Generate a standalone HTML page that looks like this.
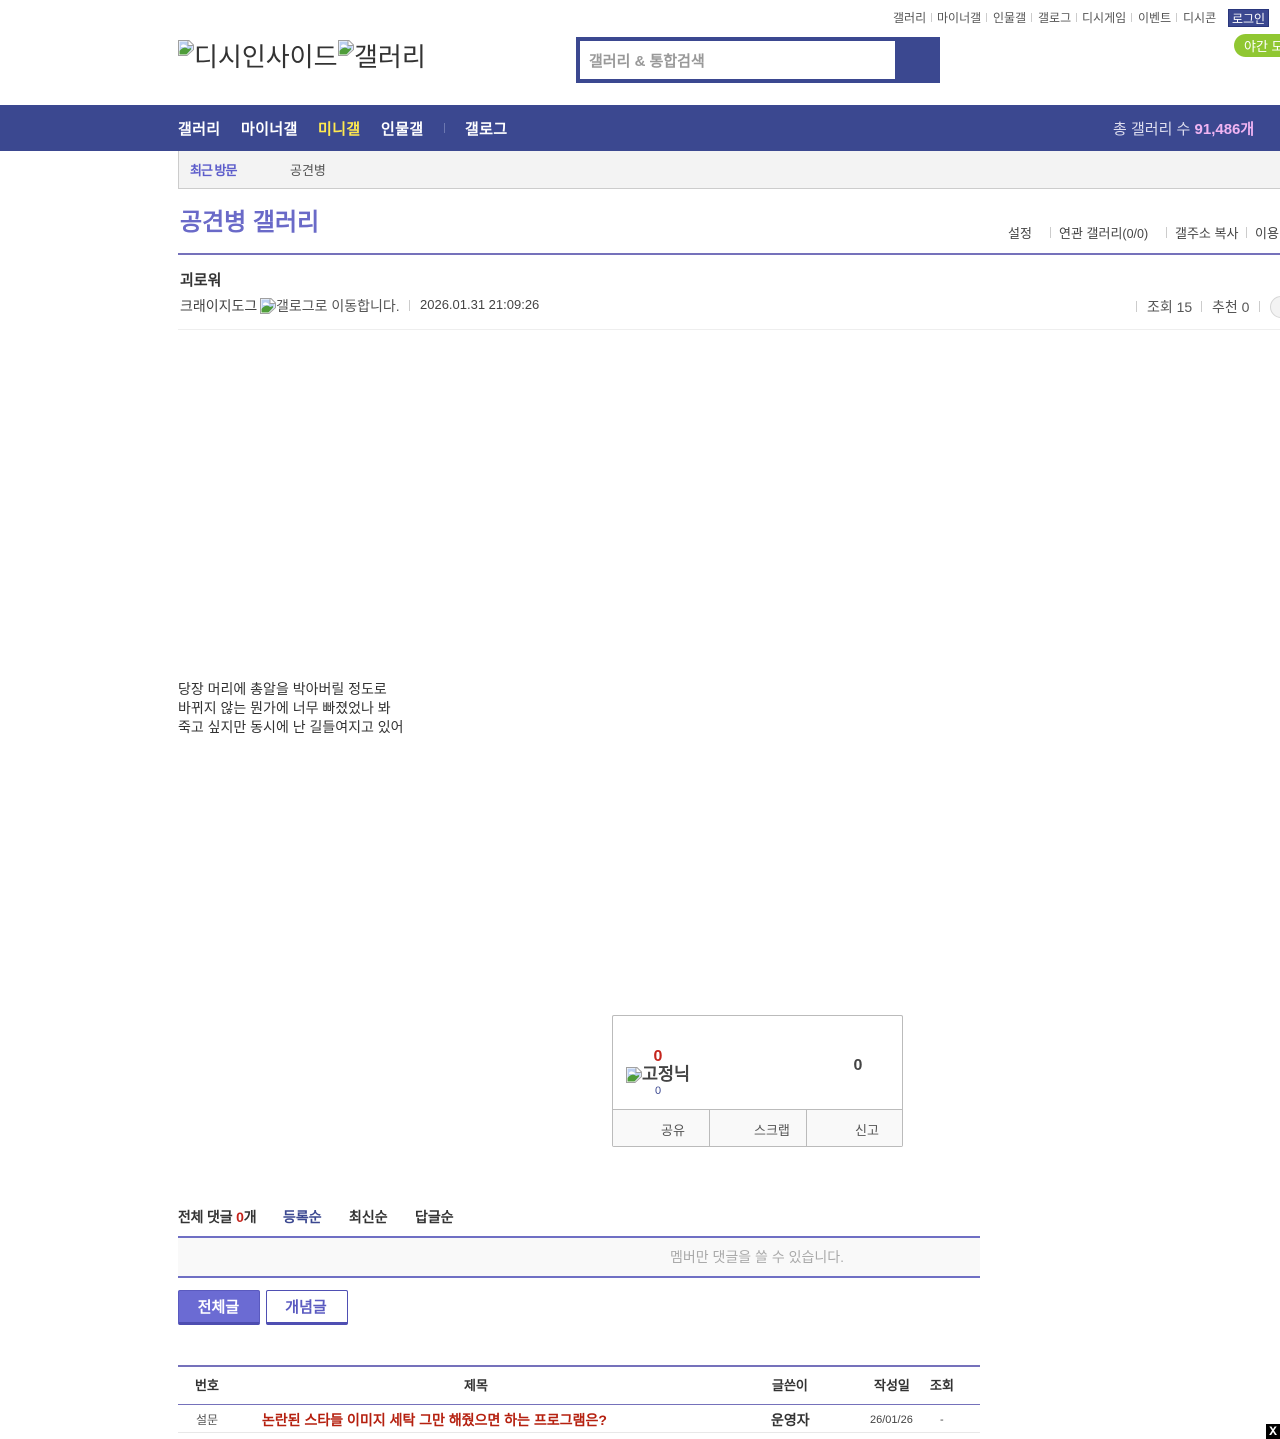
<!DOCTYPE html>
<html><head><meta charset="utf-8"><title>공견병 갤러리</title>
<style>
html,body{margin:0;padding:0;background:#fff;width:1280px;height:1439px;overflow:hidden}
body{position:relative;font-family:"Liberation Sans",sans-serif;color:#333}
.a{position:absolute;white-space:nowrap}
.b{position:absolute}
.s{position:absolute;width:1px;background:#ccc}
svg.i{position:absolute;width:16px;height:16px}
</style></head><body>
<svg width="0" height="0" style="position:absolute"><defs><symbol id="bk" viewBox="0 0 16 16"><path d="M.5.5H11L15.500 5V9.500L9 15.500H.5Z" fill="#fff" stroke="#a0a0a0"/><path d="M1.500 1.500H10V6H14.500V9L8.500 14.500H1.500Z" fill="#bcd0f2"/><path d="M3 6c1-2 3-2 4-1 1 0 2 1 2 2H3Z" fill="#fff"/><path d="M1.500 14.500V11C5 7 8 7 10 9L13 8V9.500L8.500 14.500Z" fill="#4f9d3a"/><path d="M10 1V5.500H15" fill="#fff" stroke="#a0a0a0"/></symbol></defs></svg>

<div class="a" style="left:893px;top:12px;font-size:12px;color:#555;line-height:13px">갤러리</div><div class="s" style="left:931px;top:13px;height:9px"></div>
<div class="a" style="left:937px;top:12px;font-size:12px;color:#555;line-height:13px">마이너갤</div><div class="s" style="left:986px;top:13px;height:9px"></div>
<div class="a" style="left:993px;top:12px;font-size:12px;color:#555;line-height:13px">인물갤</div><div class="s" style="left:1031px;top:13px;height:9px"></div>
<div class="a" style="left:1038px;top:12px;font-size:12px;color:#555;line-height:13px">갤로그</div><div class="s" style="left:1076px;top:13px;height:9px"></div>
<div class="a" style="left:1082px;top:12px;font-size:12px;color:#555;line-height:13px">디시게임</div><div class="s" style="left:1131px;top:13px;height:9px"></div>
<div class="a" style="left:1138px;top:12px;font-size:12px;color:#555;line-height:13px">이벤트</div><div class="s" style="left:1176px;top:13px;height:9px"></div>
<div class="a" style="left:1183px;top:12px;font-size:12px;color:#555;line-height:13px">디시콘</div>
<div class="a" style="left:1228px;top:9px;width:39px;height:16px;border:1px solid #29367c;background:#3b4890;color:#fff;font-size:12px;line-height:18px;text-align:center">로그인</div>
<div class="a" style="left:1234px;top:34px;width:60px;height:23px;border-radius:12px 0 0 12px;background:#90c732;color:#fff;font-size:13px;line-height:26px;padding-left:10px">야간 모드</div>

<svg class="i" style="left:178px;top:40px"><use href="#bk"/></svg>
<div class="a" style="left:194px;top:42px;font-size:26px;line-height:30px;color:#333">디시인사이드</div>
<svg class="i" style="left:338px;top:40px"><use href="#bk"/></svg>
<div class="a" style="left:354px;top:42px;font-size:26px;line-height:30px;color:#333">갤러리</div>

<div class="b" style="left:576px;top:37px;width:364px;height:46px;background:#3b4890"></div>
<div class="b" style="left:580px;top:41px;width:315px;height:38px;background:#fff"></div>
<div class="a" style="left:589px;top:53px;font-size:15px;line-height:18px;font-weight:700;color:#999">갤러리 &amp; 통합검색</div>

<div class="b" style="left:0;top:105px;width:1280px;height:46px;background:#3b4890"></div>
<div class="a" style="left:178px;top:121px;font-size:15px;line-height:18px;font-weight:700;color:#fff;letter-spacing:.4px">갤러리</div>
<div class="a" style="left:241px;top:121px;font-size:15px;line-height:18px;font-weight:700;color:#fff;letter-spacing:.4px">마이너갤</div>
<div class="a" style="left:318px;top:121px;font-size:15px;line-height:18px;font-weight:700;color:#ffe94f;letter-spacing:.4px">미니갤</div>
<div class="a" style="left:381px;top:121px;font-size:15px;line-height:18px;font-weight:700;color:#fff;letter-spacing:.4px">인물갤</div>
<div class="s" style="left:444px;top:123px;height:10px;background:#6c77b0"></div>
<div class="a" style="left:465px;top:121px;font-size:15px;line-height:18px;font-weight:700;color:#fff;letter-spacing:.4px">갤로그</div>
<div class="a" style="left:1113px;top:121px;font-size:15px;line-height:18px;color:#dde">총 갤러리 수 <b style="color:#f0b4f2">91,486개</b></div>

<div class="b" style="left:178px;top:151px;width:1102px;height:37px;background:#f3f3f3;border-left:1px solid #ccc;border-bottom:1px solid #ccc"></div>
<div class="a" style="left:190px;top:163px;font-size:13px;line-height:16px;font-weight:700;color:#5d5dcb;letter-spacing:-1px">최근 방문</div>
<div class="a" style="left:290px;top:163px;font-size:13px;line-height:16px;color:#555">공견병</div>

<div class="a" style="left:180px;top:208px;font-size:24px;line-height:30px;font-weight:700;color:#6a6ac8">공견병 갤러리</div>
<div class="a" style="left:1008px;top:226px;font-size:13px;line-height:16px;color:#444">설정</div><div class="s" style="left:1050px;top:227px;height:11px"></div>
<div class="a" style="left:1059px;top:226px;font-size:13px;line-height:16px;color:#444">연관 갤러리<span style="font-size:12.500px">(0/0)</span></div><div class="s" style="left:1166px;top:227px;height:11px"></div>
<div class="a" style="left:1175px;top:226px;font-size:13px;line-height:16px;color:#444">갤주소 복사</div><div class="s" style="left:1246px;top:227px;height:11px"></div>
<div class="a" style="left:1255px;top:226px;font-size:13px;line-height:16px;color:#444">이용 안내</div>
<div class="b" style="left:178px;top:253px;width:1102px;height:2px;background:#7571bb"></div>

<div class="a" style="left:180px;top:272px;font-size:15px;line-height:18px;font-weight:700;color:#333">괴로워</div>
<div class="a" style="left:180px;top:297px;font-size:14px;line-height:18px;color:#444">크래이지도그</div>
<svg class="i" style="left:260px;top:298px"><use href="#bk"/></svg>
<div class="a" style="left:276px;top:297px;font-size:14px;line-height:18px;color:#555">갤로그로 이동합니다.</div>
<div class="s" style="left:409px;top:300px;height:11px"></div>
<div class="a" style="left:420px;top:296px;font-size:13px;line-height:18px;color:#444">2026.01.31 21:09:26</div>
<div class="s" style="left:1136px;top:301px;height:11px"></div>
<div class="a" style="left:1147px;top:298px;font-size:14px;line-height:18px;color:#555">조회 15</div>
<div class="s" style="left:1201px;top:301px;height:11px"></div>
<div class="a" style="left:1212px;top:298px;font-size:14px;line-height:18px;color:#555">추천 0</div>
<div class="s" style="left:1259px;top:301px;height:11px"></div>
<div class="b" style="left:1270px;top:296px;width:30px;height:20px;border:1px solid #d5d5d5;border-radius:11px;background:#f3f3f3"></div>
<div class="b" style="left:178px;top:329px;width:1102px;height:1px;background:#eee"></div>

<div class="a" style="left:178px;top:680px;font-size:14px;line-height:19px;color:#333;white-space:pre">당장 머리에 총알을 박아버릴 정도로
바뀌지 않는 뭔가에 너무 빠졌었나 봐
죽고 싶지만 동시에 난 길들여지고 있어</div>

<div class="b" style="left:612px;top:1015px;width:289px;height:130px;border:1px solid #bbb;border-radius:2px"></div>
<div class="b" style="left:613px;top:1109px;width:289px;height:37px;background:#f9f9f9;border-top:1px solid #bbb;box-sizing:border-box"></div>
<div class="b" style="left:709px;top:1110px;width:1px;height:36px;background:#bbb"></div>
<div class="b" style="left:806px;top:1110px;width:1px;height:36px;background:#bbb"></div>
<div class="a" style="left:618px;top:1048px;width:80px;text-align:center;font-size:16px;line-height:18px;font-weight:700;color:#c4241c">0</div>
<svg class="i" style="left:626px;top:1067px"><use href="#bk"/></svg>
<div class="a" style="left:642px;top:1065px;font-size:17.400px;line-height:19px;font-weight:700;color:#444">고정닉</div>
<div class="a" style="left:618px;top:1084px;width:80px;text-align:center;font-size:11px;line-height:14px;color:#3b4890">0</div>
<div class="a" style="left:818px;top:1057px;width:80px;text-align:center;font-size:16px;line-height:18px;font-weight:700;color:#444">0</div>
<div class="a" style="left:661px;top:1123px;font-size:13px;line-height:16px;color:#555">공유</div>
<div class="a" style="left:754px;top:1123px;font-size:13px;line-height:16px;color:#555">스크랩</div>
<div class="a" style="left:855px;top:1123px;font-size:13px;line-height:16px;color:#555">신고</div>

<div class="a" style="left:178px;top:1208px;font-size:14px;line-height:18px;font-weight:700;color:#333;letter-spacing:-.2px">전체 댓글 <span style="color:#c4241c">0</span>개</div>
<div class="a" style="left:283px;top:1208px;font-size:14px;line-height:18px;font-weight:700;color:#3b4890">등록순</div>
<div class="a" style="left:349px;top:1208px;font-size:14px;line-height:18px;font-weight:700;color:#333">최신순</div>
<div class="a" style="left:415px;top:1208px;font-size:14px;line-height:18px;font-weight:700;color:#333">답글순</div>
<div class="b" style="left:178px;top:1236px;width:802px;height:42px;box-sizing:border-box;background:#f9f9f9;border-top:2px solid #6f6fc4;border-bottom:2px solid #6f6fc4"></div>
<div class="a" style="left:670px;top:1248px;font-size:14px;line-height:18px;color:#aaa">멤버만 댓글을 쓸 수 있습니다.</div>

<div class="a" style="left:178px;top:1290px;width:82px;height:35px;box-sizing:border-box;background:#6b6bd3;border:1px solid #5a5abf;border-bottom:3px solid #4d4db0;border-radius:2px;color:#fff;font-size:15px;font-weight:700;line-height:33px;text-align:center;text-indent:-1px">전체글</div>
<div class="a" style="left:266px;top:1290px;width:82px;height:35px;box-sizing:border-box;background:#fff;border:1px solid #4f4fb3;border-bottom:3px solid #4f4fb3;border-radius:2px;color:#5a5ac0;font-size:15px;font-weight:700;line-height:33px;text-align:center;text-indent:-2px">개념글</div>

<div class="b" style="left:178px;top:1365px;width:802px;height:2px;background:#7571bb"></div>
<div class="a" style="left:195px;top:1378px;font-size:13px;line-height:16px;font-weight:700;color:#333">번호</div>
<div class="a" style="left:464px;top:1378px;font-size:13px;line-height:16px;font-weight:700;color:#333">제목</div>
<div class="a" style="left:772px;top:1378px;font-size:13px;line-height:16px;font-weight:700;color:#333">글쓴이</div>
<div class="a" style="left:874px;top:1378px;font-size:13px;line-height:16px;font-weight:700;color:#333">작성일</div>
<div class="a" style="left:930px;top:1378px;font-size:13px;line-height:16px;font-weight:700;color:#333">조회</div>
<div class="b" style="left:178px;top:1404px;width:802px;height:1px;background:#7571bb"></div>
<div class="a" style="left:196px;top:1413px;font-size:12px;line-height:15px;color:#555">설문</div>
<div class="a" style="left:262px;top:1411px;font-size:14px;line-height:18px;font-weight:700;color:#b5200f">논란된 스타들 이미지 세탁 그만 해줬으면 하는 프로그램은?</div>
<div class="a" style="left:771px;top:1411px;font-size:14px;line-height:18px;font-weight:700;color:#333">운영자</div>
<div class="a" style="left:870px;top:1413px;font-size:11px;line-height:15px;color:#444">26/01/26</div>
<div class="a" style="left:940px;top:1413px;font-size:11px;line-height:15px;color:#444">-</div>
<div class="b" style="left:178px;top:1432px;width:802px;height:1px;background:#e8e8e8"></div>
<div class="a" style="left:1266px;top:1424px;width:14px;height:15px;background:#000;color:#fff;font-family:'Liberation Mono',monospace;font-size:13px;font-weight:700;line-height:16px;text-align:center">X</div>
</body></html>
